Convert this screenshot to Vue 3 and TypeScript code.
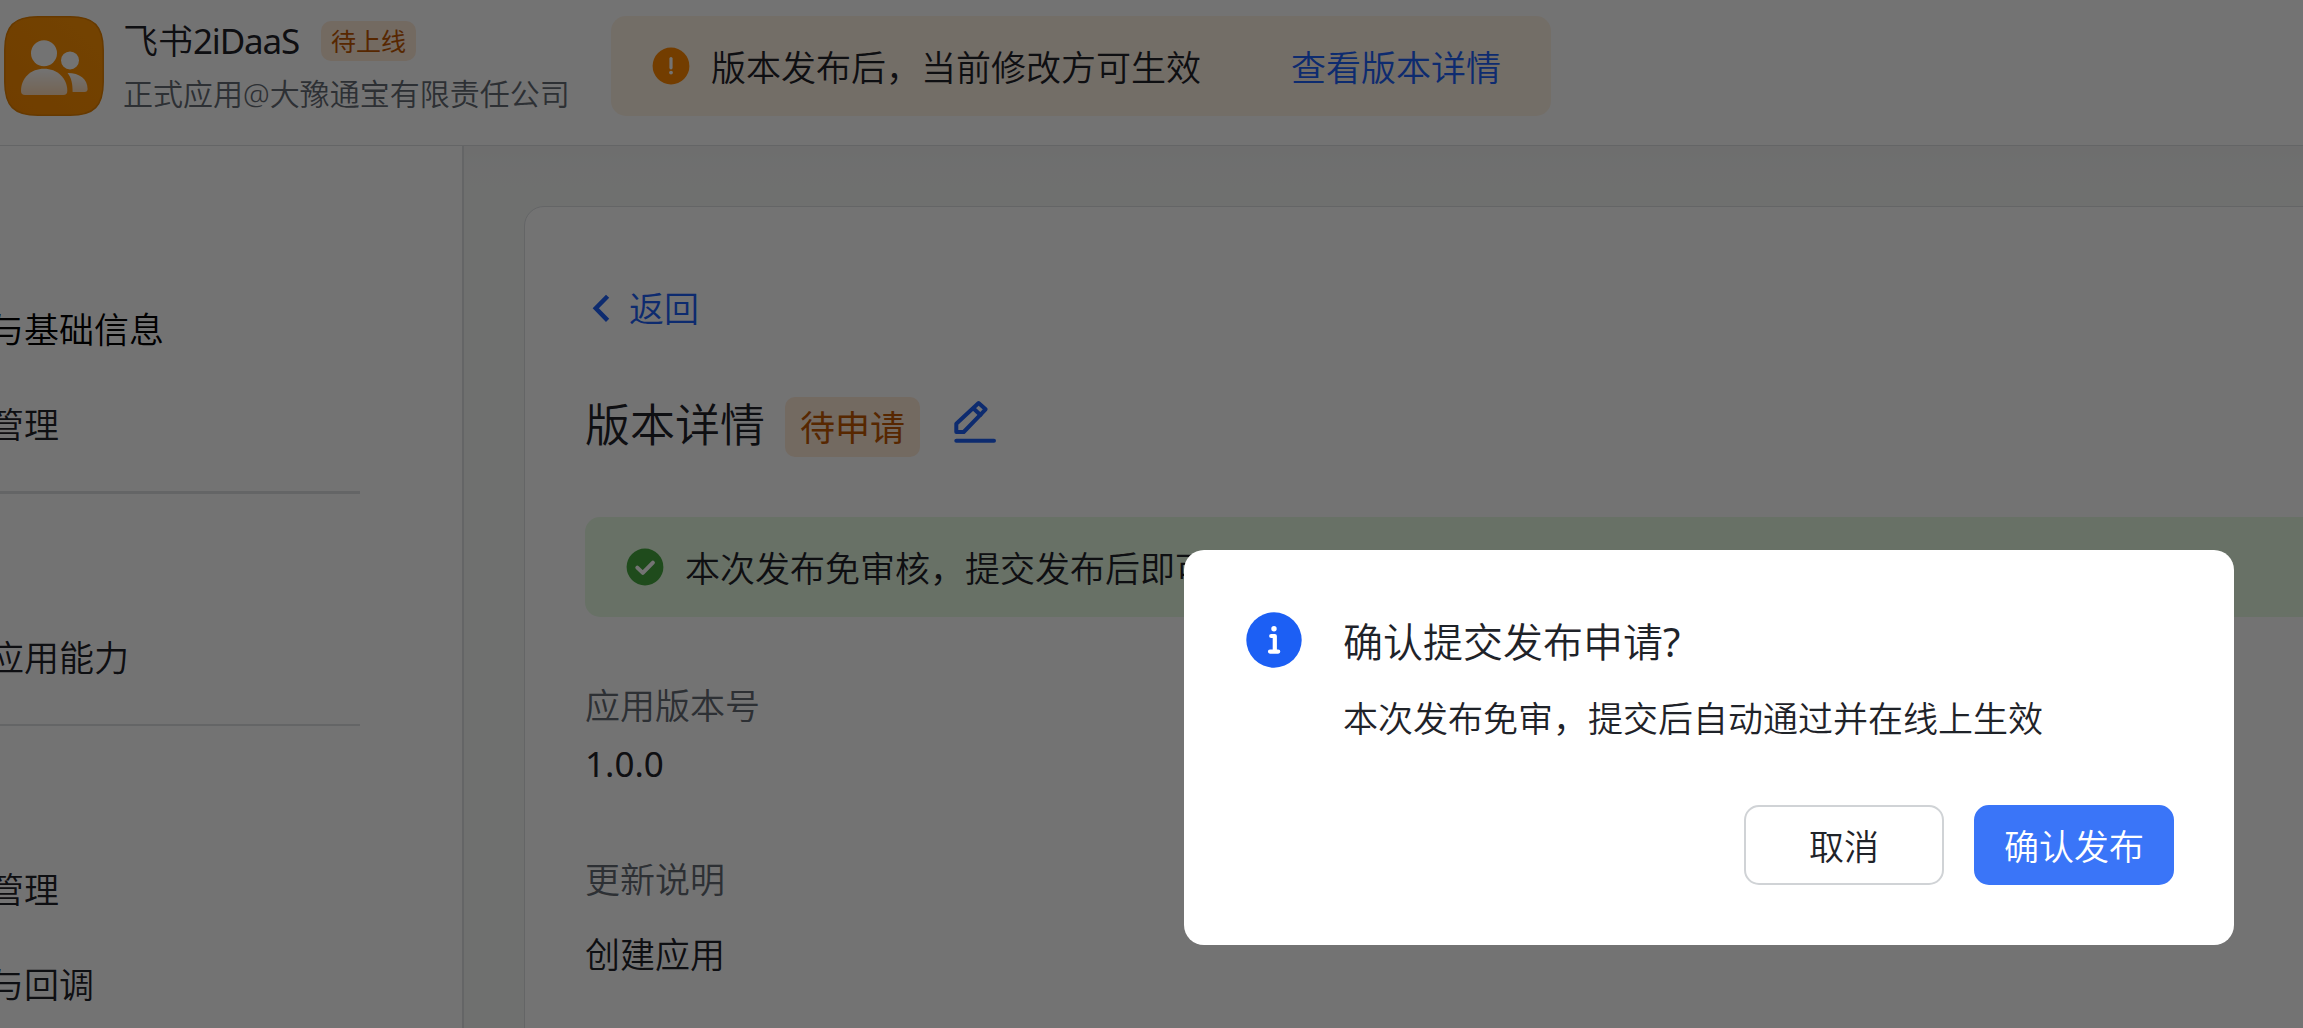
<template>
  <div class="page">
    <header class="header">
      <svg class="app-logo" viewBox="0 0 100 100">
        <defs>
          <linearGradient id="logo-bg" x1="1" y1="0" x2="0" y2="1">
            <stop offset="0" stop-color="#ff9404" />
            <stop offset="1" stop-color="#f98a00" />
          </linearGradient>
          <linearGradient id="logo-fg" x1="0" y1="0" x2="0" y2="1">
            <stop offset="0" stop-color="#fff" />
            <stop offset="1" stop-color="#ffdcb8" />
          </linearGradient>
        </defs>
        <path
          d="M0.8 34C0.8 10 10 0.8 34 0.8H66C90 0.8 99.2 10 99.2 34V66C99.2 90 90 99.2 66 99.2H34C10 99.2 0.8 90 0.8 66Z"
          fill="url(#logo-bg)"
          stroke="#e27f00"
          stroke-width="1.5"
        />
        <circle cx="40" cy="37.2" r="13" fill="#fff" />
        <circle cx="66" cy="44.4" r="9" fill="#fff" />
        <path d="M40 52.8c13 0 23.3 9 23.3 22.2q0 4-4 4H21q-4 0-4-4c0-13.200 10-22.200 23-22.200z" fill="url(#logo-fg)" />
        <path d="M63.600 57c12 0 20 6 20 16q0 3-3 3H68.600c0-8-1-14-5-19z" fill="url(#logo-fg)" />
      </svg>
      <div class="app-info">
        <div class="app-info__row">
          <span class="app-info__name">飞书<span class="latin">2iDaaS</span></span>
          <span class="tag tag--small">待上线</span>
        </div>
        <div class="app-info__desc">正式应用@大豫通宝有限责任公司</div>
      </div>
      <div class="notice notice--warning">
        <svg class="notice__icon" viewBox="0 0 40 40">
          <circle cx="20" cy="20" r="18.4" fill="#ff8800" />
          <path d="M20 12.6v9.2" stroke="#fff" stroke-width="3.2" stroke-linecap="round" />
          <circle cx="20" cy="26.6" r="1.9" fill="#fff" />
        </svg>
        <span class="notice__text">版本发布后，当前修改方可生效</span>
        <a class="notice__link">查看版本详情</a>
      </div>
    </header>

    <div class="body">
      <aside class="sidebar">
        <div
          v-for="(group, index) in menuGroups"
          :key="index"
          class="menu-group"
        >
          <div
            v-for="item in group"
            :key="item.label"
            class="menu-item"
            :class="{ 'menu-item--active': item.active }"
          >
            {{ item.label }}
          </div>
        </div>
      </aside>

      <main class="content">
        <section class="card">
          <a class="back">
            <svg class="back__icon" viewBox="0 0 35 35">
              <path d="M22.6 4.200L10.800 16.300L22.600 28.400" />
            </svg>
            返回
          </a>
          <div class="title-row">
            <h1 class="title">版本详情</h1>
            <span class="tag">待申请</span>
            <svg class="edit-icon" viewBox="0 0 42 43">
              <path d="M2.300 32V23.800L24.600 3L31.600 9.300L9.700 32Z" />
              <path d="M19.500 8.500L26.500 15" />
              <path d="M2.300 40.700H40" />
            </svg>
          </div>
          <div class="notice notice--success">
            <svg class="notice__icon" viewBox="0 0 40 40">
              <circle cx="20" cy="20" r="18.4" fill="#45a73f" />
              <path
                d="M12.3 20.6L17.8 25.9L27.9 15.6"
                fill="none"
                stroke="#fff"
                stroke-width="4"
                stroke-linecap="round"
                stroke-linejoin="round"
              />
            </svg>
            <span class="notice__text">本次发布免审核，提交发布后即可</span>
          </div>
          <dl class="fields">
            <dt>应用版本号</dt>
            <dd class="fields__version">1.0.0</dd>
            <dt>更新说明</dt>
            <dd>创建应用</dd>
          </dl>
        </section>
      </main>
    </div>

    <div v-if="visible" class="mask">
      <div class="dialog">
        <svg class="dialog__icon" viewBox="0 0 60 60">
          <circle cx="30" cy="30" r="27.7" fill="#1c5ff4" />
          <circle cx="30" cy="18.8" r="2.7" fill="#fff" />
          <path
            d="M27.2 26H30.800V41.600M26 41.600H34.200"
            fill="none"
            stroke="#fff"
            stroke-width="4.2"
            stroke-linecap="round"
            stroke-linejoin="round"
          />
        </svg>
        <div class="dialog__main">
          <h2 class="dialog__title">确认提交发布申请<span class="latin-mark">?</span></h2>
          <p class="dialog__text">本次发布免审，提交后自动通过并在线上生效</p>
          <div class="dialog__footer">
            <button class="btn" type="button" @click="close">取消</button>
            <button class="btn btn--primary" type="button" @click="close">确认发布</button>
          </div>
        </div>
      </div>
    </div>
  </div>
</template>

<script setup lang="ts">
import { ref } from 'vue';

interface MenuItem {
  label: string;
  active?: boolean;
}

const menuGroups: MenuItem[][] = [
  [{ label: '与基础信息', active: true }, { label: '管理' }],
  [{ label: '应用能力' }],
  [{ label: '管理' }, { label: '与回调' }],
];

const visible = ref(true);

const close = () => {
  visible.value = false;
};
</script>

<style>
body {
  overflow: hidden;
}
</style>

<style scoped>
.page {
  position: relative;
  display: flex;
  flex-direction: column;
  height: 100vh;
  overflow: hidden;
  box-sizing: border-box;
  font-family: 'Noto Sans', 'Noto Sans CJK SC', sans-serif;
  font-size: 35px;
  line-height: 50px;
  font-weight: 350;
  color: #1f2329;
  background: #fff;
  white-space: nowrap;
}

.page *,
.page *::before,
.page *::after {
  box-sizing: border-box;
}

.header {
  display: flex;
  flex: none;
  height: 146px;
  padding: 16px 0 0 4px;
  border-bottom: 1px solid #dee0e3;
}

.app-logo {
  flex: none;
  width: 100px;
  height: 100px;
}

.app-info {
  flex: none;
  width: 507px;
  padding-left: 19px;
}

.app-info__row {
  display: flex;
  align-items: center;
  height: 50px;
}

.app-info__name {
  width: 198px;
}

.latin {
  font-weight: 400;
  letter-spacing: -1.2px;
}

.latin-mark {
  font-weight: 400;
}

.app-info__desc {
  height: 50px;
  line-height: 56px;
  font-size: 30px;
  color: #646a73;
}

.tag {
  height: 60px;
  padding: 0 15px;
  border-radius: 10px;
  line-height: 61px;
  font-weight: 400;
  color: #c25700;
  background: #feead8;
}

.tag--small {
  height: 40px;
  padding: 0 10px;
  font-size: 25px;
  line-height: 41px;
}

.notice {
  display: flex;
  align-items: center;
  height: 100px;
  padding: 0 50px 0 40px;
  border-radius: 15px;
}

.notice--warning {
  flex: none;
  width: 940px;
  background: #fff3e5;
}

.notice--success {
  margin: 60px -60px 0 0;
  background: #e6fae3;
}

.notice__icon {
  flex: none;
  width: 40px;
  height: 40px;
  margin-right: 20px;
}

.notice__text,
.notice__link {
  padding-top: 3px;
}

.notice__link {
  margin-left: auto;
  color: #1d60f5;
}

.body {
  display: flex;
  flex: 1;
  min-height: 0;
}

.sidebar {
  flex: none;
  width: 464px;
  border-right: 2px solid #dee0e3;
  padding-top: 136px;
}

.menu-group {
  width: 360px;
  height: 232px;
}

.menu-group:first-child {
  height: 328px;
}

.menu-group:not(:last-child)::after {
  content: '';
  display: block;
  margin-top: 19px;
  height: 2px;
  background: #dee0e3;
}

.menu-group:first-child::after {
  height: 3px;
}

.menu-item {
  height: 95px;
  margin-left: -11px;
  line-height: 95px;
}

.menu-item--active {
  color: #000;
}

.content {
  flex: 1;
  min-width: 0;
  padding: 60px 0 0 60px;
  background: linear-gradient(#f3f3f3 0, #f5f7f6 24px, #f5f9f7 60px);
}

.card {
  height: 900px;
  margin-right: -60px;
  padding: 77px 60px 0;
  border: 1px solid #dee0e3;
  border-radius: 20px;
  background: #fff;
}

.back {
  display: flex;
  align-items: center;
  height: 50px;
  color: #1d60f5;
}

.back__icon {
  width: 35px;
  height: 35px;
  margin-right: 9px;
}

.back__icon path {
  fill: none;
  stroke: currentColor;
  stroke-width: 4.5;
}

.title-row {
  display: flex;
  align-items: center;
  height: 60px;
  margin-top: 63px;
}

.title {
  margin: -4px 20px 0 0;
  font-size: 45px;
  font-weight: 350;
  line-height: 60px;
}

.edit-icon {
  width: 42px;
  height: 43px;
  margin: -11px 0 0 34px;
  fill: none;
  stroke: #1d60f5;
  stroke-width: 4;
  stroke-linecap: round;
  stroke-linejoin: round;
}

.fields {
  margin: 64px 0 0;
}

.fields dt {
  color: #646a73;
}

.fields dd {
  margin: 25px 0 0;
}

.fields .fields__version {
  margin: 8px 0 66px;
  font-weight: 400;
}

.mask {
  position: absolute;
  inset: 0;
  background: rgba(0, 0, 0, 0.55);
}

.dialog {
  position: absolute;
  left: 1184px;
  top: 550px;
  display: flex;
  width: 1050px;
  height: 395px;
  padding: 60px;
  border-radius: 20px;
  background: #fff;
}

.dialog__icon {
  flex: none;
  width: 60px;
  height: 60px;
  margin-right: 39px;
}

.dialog__main {
  flex: 1;
}

.dialog__title {
  margin: 0;
  font-size: 40px;
  font-weight: 350;
  line-height: 63px;
}

.dialog__text {
  margin: 21px 0 0;
}

.dialog__footer {
  display: flex;
  justify-content: flex-end;
  gap: 30px;
  margin-top: 61px;
}

.btn {
  width: 200px;
  height: 80px;
  padding: 3px 0 0;
  border: 2px solid #d0d3d6;
  border-radius: 15px;
  font: inherit;
  color: inherit;
  background: #fff;
  cursor: pointer;
}

.btn--primary {
  border-color: #3a75f8;
  color: #fff;
  background: #3a75f8;
}
</style>
